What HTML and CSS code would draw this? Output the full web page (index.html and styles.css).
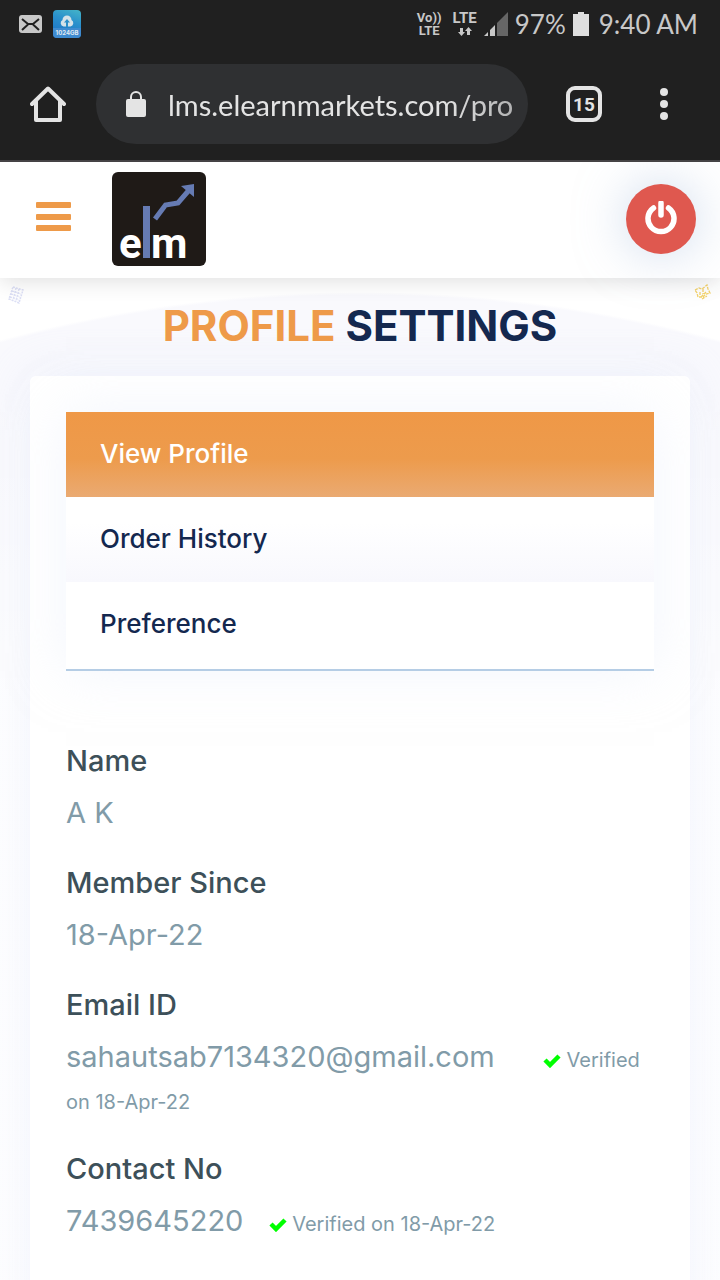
FILE: index.html
```html
<!DOCTYPE html>
<html lang="en">
<head>
<meta charset="utf-8">
<meta name="viewport" content="width=device-width, initial-scale=1">
<title>Profile Settings</title>
<link rel="stylesheet" href="styles.css">
</head>
<body>
<div class="status">
  <div class="status-group">
    <svg width="23" height="18" viewBox="0 0 23 18" aria-hidden="true"><rect width="23" height="18" rx="3" fill="#c8c8c8"/><path d="M3 4 9 9H14L20 4M3 15 9 9.500M20 15 14 9.500" fill="none" stroke="#202020" stroke-width="2"/></svg>
    <span class="app">
      <svg width="14" height="12" viewBox="0 0 14 12" aria-hidden="true"><path d="M3.500 11.500A3.500 3.500 0 0 1 2.500 5A4.500 4.500 0 0 1 11.500 5A3.500 3.500 0 0 1 10.500 11.500Z" fill="#d5e2e8"/><path d="M7 4 10 7.500H8V12H6V7.500H4Z" fill="#2b8ec8"/></svg>
      <span class="app-label">1024GB</span>
    </span>
  </div>
  <div class="status-group status-right">
    <span class="volte"><span>Vo))</span><span>LTE</span></span>
    <span class="lte"><span>LTE</span>
      <svg width="14" height="9" viewBox="0 0 14 9" aria-hidden="true"><path d="M2 1H5V5H7L3.500 9 0 5H2ZM9 8H12V4H14L10.500 0 7 4H9Z" fill="#c8c8c8"/></svg>
    </span>
    <svg width="24" height="24" viewBox="0 0 24 24" aria-hidden="true"><path d="M0 24 4 20V24ZM6 24V18L11 13V24Z" fill="#c8c8c8"/><path d="M13 24V11L24 0V24Z" fill="#666"/></svg>
    <span class="status-text">97%</span>
    <svg width="16" height="24" viewBox="0 0 16 24" aria-hidden="true"><path d="M5 0H11V2H16V24H0V2H5Z" fill="#dedede"/></svg>
    <span class="status-text time">9:40 AM</span>
  </div>
</div>

<div class="toolbar">
  <button class="tool" aria-label="Home">
    <svg width="36" height="36" viewBox="0 0 36 36" aria-hidden="true"><path d="M2 18 18 2.500 34 18M6 15V34H30V15" fill="none" stroke="#e4e4e4" stroke-width="4" stroke-linejoin="round" stroke-linecap="round"/></svg>
  </button>
  <label class="address">
    <svg width="20" height="26" viewBox="0 0 20 26" aria-hidden="true"><path d="M5 9V6A5 5 0 0 1 15 6V9" fill="none" stroke="#e4e4e4" stroke-width="2"/><rect y="8" width="20" height="18" rx="2" fill="#e4e4e4"/></svg>
    <input class="url" type="text" aria-label="Address" value="lms.elearnmarkets.com/pro">
  </label>
  <button class="tool tabs-count" aria-label="Open tabs">15</button>
  <button class="tool" aria-label="More">
    <svg width="8" height="32" viewBox="0 0 8 32" aria-hidden="true"><g fill="#e4e4e4"><circle cx="4" cy="4" r="4"/><circle cx="4" cy="16" r="4"/><circle cx="4" cy="28" r="4"/></g></svg>
  </button>
</div>

<header class="header">
  <button class="menu" aria-label="Menu">
    <svg width="35" height="30" viewBox="0 0 35 30" aria-hidden="true"><g fill="#ee9a49"><rect width="35" height="6" rx="1"/><rect y="12" width="35" height="6" rx="1"/><rect y="23" width="35" height="6" rx="1"/></g></svg>
  </button>
  <a class="logo" href="#" aria-label="elm home">
    <svg width="94" height="94" viewBox="0 0 94 94" aria-hidden="true"><rect width="94" height="94" rx="6" fill="#1f1a17"/><g class="logo-text"><text x="7" y="86">e</text><text x="39" y="86">m</text></g><path d="M31 34H38V86H31Z" fill="#667bb3"/><path d="M43 47 53.500 33 66 31 78 17" fill="none" stroke="#667bb3" stroke-width="5"/><path d="M69 14 82 12V25Z" fill="#667bb3"/></svg>
  </a>
  <button class="power" aria-label="Log out">
    <svg width="34" height="36" viewBox="0 0 34 36" aria-hidden="true"><path d="M9.500 7A13 13 0 1 0 24.500 7M17 2V14" fill="none" stroke="#fff" stroke-width="5.500" stroke-linecap="round"/></svg>
  </button>
</header>

<main class="page">
  <svg class="deco deco-left" width="16" height="18" viewBox="0 0 16 18" aria-hidden="true"><path d="M5 1 15 4 11 17 1 13ZM4 5 13 8M3 8 12 11M2 11 11 14M8 2 5 14M11 3 8 15" fill="none" stroke="#dcdff5" stroke-width="1.500" stroke-dasharray="2 1"/></svg>
  <svg class="deco deco-right" width="17" height="16" viewBox="0 0 17 16" aria-hidden="true"><path d="M1 6 5 4 8 5 13 1 14 5 16 9 12 10 9 13 4 13 3 9ZM6 8V11M9 5V10M12 8 7 13M8 15 13 12" fill="none" stroke="#f5d36a" stroke-width="1.300" stroke-dasharray="3 1"/></svg>
  <h1 class="title"><span class="accent">PROFILE</span> SETTINGS</h1>
  <section class="card">
    <nav class="tabs">
      <a class="tab active" href="#">View Profile</a>
      <a class="tab" href="#">Order History</a>
      <a class="tab" href="#">Preference</a>
    </nav>
    <dl class="details">
      <dt>Name</dt>
      <dd>A K</dd>
      <dt>Member Since</dt>
      <dd>18-Apr-22</dd>
      <dt>Email ID</dt>
      <dd>sahautsab7134320@gmail.com <small class="verified"><svg class="check" width="18" height="14" viewBox="0 0 18 14" aria-hidden="true"><path d="M2 6 7 11 16 2" fill="none" stroke="#0f0" stroke-width="4.500"/></svg> Verified on&nbsp;18-Apr-22</small></dd>
      <dt>Contact No</dt>
      <dd>7439645220 <small class="verified near"><svg class="check" width="18" height="14" viewBox="0 0 18 14" aria-hidden="true"><path d="M2 6 7 11 16 2" fill="none" stroke="#0f0" stroke-width="4.500"/></svg> Verified on 18-Apr-22</small></dd>
      <dt>Address</dt>
    </dl>
  </section>
</main>
</body>
</html>
```
FILE: styles.css
```css
* { box-sizing: border-box; }

body {
  margin: 0;
  height: 100vh;
  display: flex;
  flex-direction: column;
  overflow: hidden;
  background: #fff;
  font-family: Inter, "Open Sans", sans-serif;
}

button {
  border: 0;
  padding: 0;
  background: none;
  font: inherit;
  cursor: pointer;
}

svg { display: block; }

a { text-decoration: none; }

.status {
  flex: none;
  height: 48px;
  padding: 0 22px 0 19px;
  display: flex;
  align-items: center;
  justify-content: space-between;
  background: #202020;
  color: #c8c8c8;
}

.status-group {
  display: flex;
  align-items: center;
  gap: 11px;
}

.status-right { gap: 7px; }

.app {
  width: 28px;
  height: 28px;
  padding-top: 5px;
  border-radius: 4px;
  display: flex;
  flex-direction: column;
  align-items: center;
  overflow: hidden;
  background: linear-gradient(20deg, #1a6cc4, #2a90cc 60%, #45b5c8);
}

.app-label {
  width: 100%;
  margin-top: 1px;
  background: #3f8bd0;
  color: #e0eaf2;
  font-size: 6px;
  font-weight: 700;
  line-height: 10px;
  text-align: center;
}

.volte, .lte {
  display: flex;
  flex-direction: column;
  align-items: center;
  font-family: Roboto, sans-serif;
  font-size: 13px;
  font-weight: 700;
  line-height: 13px;
}

.volte { margin-right: 4px; }

.lte {
  font-size: 15px;
  gap: 2px;
}

.status-text {
  font-family: Lato, sans-serif;
  font-size: 26px;
  line-height: 32px;
  white-space: nowrap;
}

.time { margin-left: 3px; }

.toolbar {
  flex: none;
  position: relative;
  z-index: 2;
  height: 114px;
  padding: 0 38px 0 30px;
  display: flex;
  align-items: center;
  border-bottom: 2px solid #454345;
  background: #202020;
}

.tool {
  flex: none;
  display: grid;
  place-items: center;
  min-width: 36px;
  height: 36px;
}

.address {
  flex: 1;
  min-width: 0;
  height: 80px;
  margin: 0 38px 0 30px;
  padding: 0 16px 0 30px;
  display: flex;
  align-items: center;
  gap: 22px;
  border-radius: 40px;
  background: #2f3032;
}

.url {
  flex: 1;
  min-width: 0;
  height: 40px;
  border: 0;
  padding: 0;
  outline: 0;
  background: none;
  color: #e4e4e4;
  font-family: Lato, sans-serif;
  font-size: 29px;
  -webkit-mask-image: linear-gradient(to right, #000 80%, #000b);
  mask-image: linear-gradient(to right, #000 80%, #000b);
}

.tabs-count {
  margin-right: 44px;
  border: 4px solid #e4e4e4;
  border-radius: 9px;
  color: #e4e4e4;
  font-family: Roboto, sans-serif;
  font-size: 19px;
  font-weight: 700;
}

.header {
  flex: none;
  position: relative;
  z-index: 1;
  height: 116px;
  padding: 0 24px 2px 36px;
  display: flex;
  align-items: center;
  background: #fff;
  box-shadow: 0 4px 20px #0000001f;
}

.menu { padding-bottom: 4px; }

.logo { margin: 0 auto 0 41px; }

.logo-text {
  fill: #fff;
  font-family: Roboto, "Liberation Sans", sans-serif;
  font-size: 42px;
  font-weight: 700;
}

.power {
  width: 70px;
  height: 70px;
  display: grid;
  place-items: center;
  border-radius: 50%;
  background: #df584f;
  box-shadow: 0 0 50px #a0b8dc80;
}

.page {
  flex: 1;
  min-height: 0;
  position: relative;
  padding: 20px 30px 0;
  overflow: hidden;
  background:
    linear-gradient(#fff0 100px, #fffc 420px),
    radial-gradient(circle 1374px at 50% 1388px, #f9f9fd 1371px, #fff 1374px);
}

.deco { position: absolute; }

.deco-left {
  top: 8px;
  left: 8px;
}

.deco-right {
  top: 6px;
  right: 9px;
}

.title {
  margin: 0;
  color: #14284f;
  font-size: 42px;
  font-weight: 700;
  line-height: 56px;
  text-align: center;
}

.accent { color: #ee9a49; }

.card {
  margin-top: 22px;
  padding: 36px;
  border-radius: 6px;
  background: #fff;
  box-shadow: 0 0 50px #e8edfb99;
}

.tabs {
  display: flex;
  flex-direction: column;
  border-bottom: 2px solid #b5cde5;
  box-shadow: 0 0 50px #e8edfb80;
}

.tab {
  height: 85px;
  padding: 0 34px 2px;
  display: flex;
  align-items: center;
  color: #14284f;
  background: linear-gradient(#fff 30%, #f8f8fd);
  font-size: 26px;
  font-weight: 500;
}

.tab.active {
  color: #fff;
  background: linear-gradient(#ef9847, #ed9b4c 55%, #eaaa72);
}

.tab:last-child {
  height: 87px;
  padding-bottom: 4px;
  background: #fff;
}

.details {
  margin: 69px 0 0;
  font-size: 29px;
  line-height: 42px;
}

.details dt {
  margin-bottom: 10px;
  color: #3d5059;
  font-weight: 500;
}

.details dd {
  margin: 0 0 28px;
  color: #819ba8;
}

.verified {
  margin-left: 40px;
  font-size: 20px;
  line-height: 20px;
}

.near { margin-left: 17px; }

.check {
  display: inline-block;
  vertical-align: -1px;
}
```
